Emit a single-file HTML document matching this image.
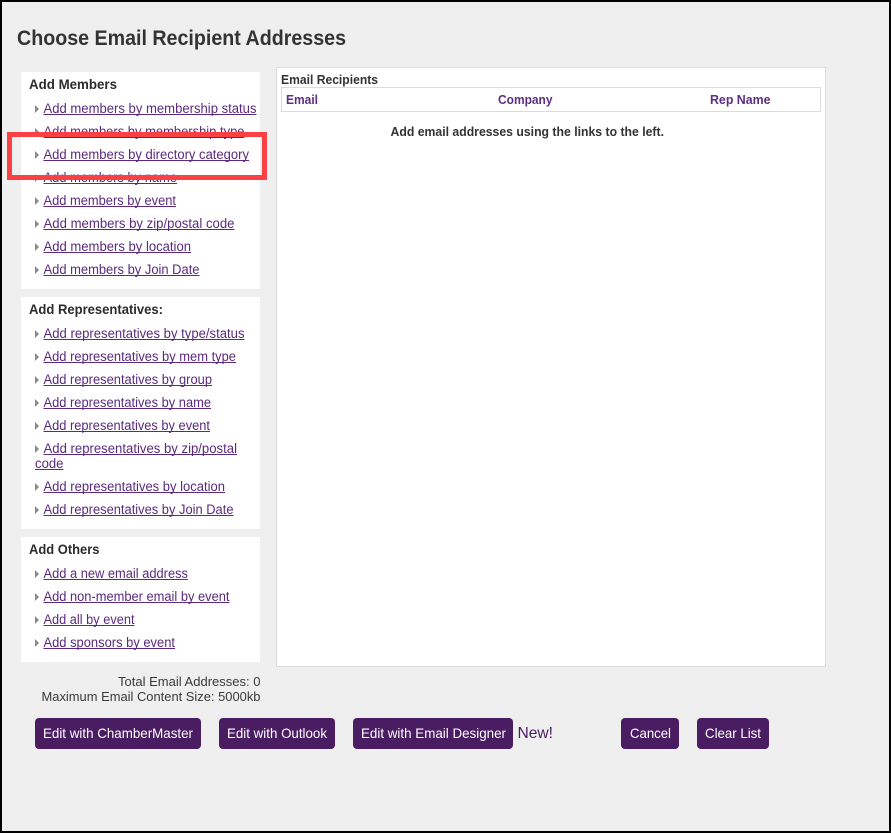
<!DOCTYPE html>
<html lang="en">
<head>
<meta charset="utf-8">
<title>Choose Email Recipient Addresses</title>
<style>
html,body{margin:0;padding:0;width:891px;height:833px;overflow:hidden;background:#efefef}
svg{display:block}
text{font-family:"Liberation Sans",Arial,sans-serif}
.h{font-size:14px;font-weight:bold;fill:#2b2b2b}
.l{font-size:13.5px;fill:#5b2a7e}
.u{stroke:#5b2a7e;stroke-width:1;transform:translateY(-1px)}
.th{font-size:13px;font-weight:bold;fill:#5e2d84}
.t{font-size:13px;fill:#3a3a3a}
.b{font-size:14px;fill:#fff}
.btn{fill:#4a1d63}
.a{fill:#8a8a8a;transform:translateY(1px)}
</style>
</head>
<body>
<svg width="891" height="833" viewBox="0 0 891 833" xmlns="http://www.w3.org/2000/svg">
<rect width="891" height="833" fill="#000"/>
<rect x="2" y="2" width="887" height="829" fill="#efefef"/>

<text x="17" y="45" font-size="21" font-weight="bold" fill="#333" textLength="329" lengthAdjust="spacingAndGlyphs">Choose Email Recipient Addresses</text>

<rect x="21" y="72" width="239" height="217" fill="#fff"/>
<rect x="21" y="297" width="239" height="232" fill="#fff"/>
<rect x="21" y="537" width="239" height="125" fill="#fff"/>

<text class="h" x="29" y="89" textLength="88" lengthAdjust="spacingAndGlyphs">Add Members</text>

<path class="a" d="M35 104v8l4-4zM35 127v8l4-4zM35 150v8l4-4zM35 173v8l4-4zM35 196v8l4-4zM35 219v8l4-4zM35 242v8l4-4zM35 265v8l4-4z"/>
<text class="l" x="43.5" y="113" textLength="213" lengthAdjust="spacingAndGlyphs">Add members by membership status</text><path class="u" d="M43.5 115.5h213"/>
<text class="l" x="43.5" y="136" textLength="201" lengthAdjust="spacingAndGlyphs">Add members by membership type</text><path class="u" d="M43.5 138.5h201"/>
<text class="l" x="43.5" y="159" textLength="205.500" lengthAdjust="spacingAndGlyphs">Add members by directory category</text><path class="u" d="M43.5 161.5h205.500"/>
<text class="l" x="43.5" y="182" textLength="133.500" lengthAdjust="spacingAndGlyphs">Add members by name</text><path class="u" d="M43.5 184.500h133.500"/>
<text class="l" x="43.5" y="205" textLength="132.500" lengthAdjust="spacingAndGlyphs">Add members by event</text><path class="u" d="M43.5 207.500h132.500"/>
<text class="l" x="43.5" y="228" textLength="191" lengthAdjust="spacingAndGlyphs">Add members by zip/postal code</text><path class="u" d="M43.5 230.500h191"/>
<text class="l" x="43.5" y="251" textLength="147.500" lengthAdjust="spacingAndGlyphs">Add members by location</text><path class="u" d="M43.5 253.500h147.500"/>
<text class="l" x="43.5" y="274" textLength="156" lengthAdjust="spacingAndGlyphs">Add members by Join Date</text><path class="u" d="M43.5 276.500h156"/>

<text class="h" x="29" y="314" textLength="134" lengthAdjust="spacingAndGlyphs">Add Representatives:</text>

<path class="a" d="M35 329v8l4-4zM35 352v8l4-4zM35 375v8l4-4zM35 398v8l4-4zM35 421v8l4-4zM35 444v8l4-4zM35 482v8l4-4zM35 505v8l4-4z"/>
<text class="l" x="43.5" y="338" textLength="201" lengthAdjust="spacingAndGlyphs">Add representatives by type/status</text><path class="u" d="M43.5 340.500h201"/>
<text class="l" x="43.5" y="361" textLength="192.500" lengthAdjust="spacingAndGlyphs">Add representatives by mem type</text><path class="u" d="M43.5 363.500h192.500"/>
<text class="l" x="43.5" y="384" textLength="168.500" lengthAdjust="spacingAndGlyphs">Add representatives by group</text><path class="u" d="M43.5 386.500h168.500"/>
<text class="l" x="43.5" y="407" textLength="167.500" lengthAdjust="spacingAndGlyphs">Add representatives by name</text><path class="u" d="M43.5 409.500h167.500"/>
<text class="l" x="43.5" y="430" textLength="166.500" lengthAdjust="spacingAndGlyphs">Add representatives by event</text><path class="u" d="M43.5 432.500h166.500"/>
<text class="l" x="43.5" y="453" textLength="193.500" lengthAdjust="spacingAndGlyphs">Add representatives by zip/postal</text><path class="u" d="M43.5 455.500h193.500"/>
<text class="l" x="35" y="468" textLength="28.500" lengthAdjust="spacingAndGlyphs">code</text><path class="u" d="M35 470.500h28.500"/>
<text class="l" x="43.5" y="491" textLength="181.500" lengthAdjust="spacingAndGlyphs">Add representatives by location</text><path class="u" d="M43.5 493.500h181.500"/>
<text class="l" x="43.5" y="514" textLength="190" lengthAdjust="spacingAndGlyphs">Add representatives by Join Date</text><path class="u" d="M43.5 516.500h190"/>

<text class="h" x="29" y="554" textLength="70.500" lengthAdjust="spacingAndGlyphs">Add Others</text>

<path class="a" d="M35 569v8l4-4zM35 592v8l4-4zM35 615v8l4-4zM35 638v8l4-4z"/>
<text class="l" x="43.5" y="578" textLength="144.500" lengthAdjust="spacingAndGlyphs">Add a new email address</text><path class="u" d="M43.5 580.500h144.500"/>
<text class="l" x="43.5" y="601" textLength="186" lengthAdjust="spacingAndGlyphs">Add non-member email by event</text><path class="u" d="M43.5 603.500h186"/>
<text class="l" x="43.5" y="624" textLength="91" lengthAdjust="spacingAndGlyphs">Add all by event</text><path class="u" d="M43.5 626.500h91"/>
<text class="l" x="43.5" y="647" textLength="131.500" lengthAdjust="spacingAndGlyphs">Add sponsors by event</text><path class="u" d="M43.5 649.500h131.500"/>

<rect x="276.500" y="67.500" width="549" height="599" fill="#fff" stroke="#dcdcdc"/>
<text x="281" y="84" font-size="13" font-weight="bold" fill="#333" textLength="97" lengthAdjust="spacingAndGlyphs">Email Recipients</text>
<rect x="281.500" y="87.500" width="539" height="24" fill="#fff" stroke="#dcdcdc"/>
<text class="th" x="286" y="104" textLength="32" lengthAdjust="spacingAndGlyphs">Email</text>
<text class="th" x="498" y="104" textLength="54.500" lengthAdjust="spacingAndGlyphs">Company</text>
<text class="th" x="710" y="104" textLength="60.500" lengthAdjust="spacingAndGlyphs">Rep Name</text>
<text x="390.500" y="136" font-size="13" font-weight="bold" fill="#333" textLength="273.500" lengthAdjust="spacingAndGlyphs">Add email addresses using the links to the left.</text>

<text class="t" x="118" y="686" textLength="142.500" lengthAdjust="spacingAndGlyphs">Total Email Addresses: 0</text>
<text class="t" x="41.500" y="701" textLength="219" lengthAdjust="spacingAndGlyphs">Maximum Email Content Size: 5000kb</text>

<rect class="btn" x="35" y="718" width="166" height="31" rx="4"/>
<text class="b" x="43" y="738" textLength="150" lengthAdjust="spacingAndGlyphs">Edit with ChamberMaster</text>
<rect class="btn" x="219" y="718" width="116" height="31" rx="4"/>
<text class="b" x="227" y="738" textLength="100" lengthAdjust="spacingAndGlyphs">Edit with Outlook</text>
<rect class="btn" x="353" y="718" width="160" height="31" rx="4"/>
<text class="b" x="361" y="738" textLength="145" lengthAdjust="spacingAndGlyphs">Edit with Email Designer</text>
<text x="517.500" y="738" font-size="16" fill="#4a1d63" textLength="35.500" lengthAdjust="spacingAndGlyphs">New!</text>
<rect class="btn" x="621" y="718" width="58" height="31" rx="4"/>
<text class="b" x="630" y="738" textLength="41" lengthAdjust="spacingAndGlyphs">Cancel</text>
<rect class="btn" x="697" y="718" width="72" height="31" rx="4"/>
<text class="b" x="705" y="738" textLength="56" lengthAdjust="spacingAndGlyphs">Clear List</text>

<rect x="9.500" y="134.500" width="255" height="43" fill="none" stroke="#fb4143" stroke-width="5"/>
</svg>
</body>
</html>
